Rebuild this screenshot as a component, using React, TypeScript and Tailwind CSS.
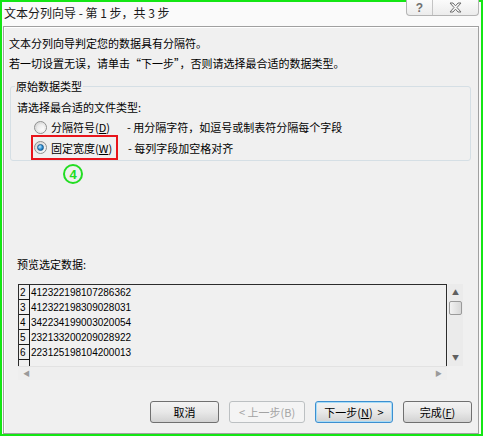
const cjk = "font-['Noto_Sans_CJK_SC','Microsoft_YaHei',sans-serif]";

const rows = [
  ["2", "412322198107286362"],
  ["3", "412322198309028031"],
  ["4", "342234199003020054"],
  ["5", "232133200209028922"],
  ["6", "223125198104200013"],
  ["", ""],
];

function Radio({ checked }: { checked?: boolean }) {
  return (
    <span className="flex h-[13px] w-[13px] shrink-0 items-center justify-center rounded-full border border-[#8e8f8f] bg-gradient-to-br from-[#d4d4d4] to-[#fbfbfb]">
      {checked ? (
        <span className="h-[7px] w-[7px] rounded-full border border-[#1b5e93] bg-[radial-gradient(circle_at_35%_35%,#c4ecff,#2d8fd5_55%,#10507f)]" />
      ) : (
        <span className="h-[7px] w-[7px] rounded-full bg-gradient-to-br from-[#e4e4e4] to-[#ffffff]" />
      )}
    </span>
  );
}

function Btn({ children, kind, w }: { children: React.ReactNode; kind?: "default" | "disabled"; w: string }) {
  let cls = "border-[#707070] bg-gradient-to-b from-[#f3f3f3] via-[#e8e8e8] to-[#d2d2d2] text-black";
  if (kind === "default")
    cls = "border-[#3c8fd0] bg-gradient-to-b from-[#f3f3f3] via-[#e8e8e8] to-[#d2d2d2] text-black shadow-[inset_0_0_0_1px_#a8dcf7]";
  if (kind === "disabled") cls = "border-[#bcc0c2] bg-[#f4f4f4] text-[#a3a3a3]";
  return (
    <button className={`flex h-[22px] items-center justify-center rounded-[3px] border text-[11px] leading-none ${w} ${cls}`}>
      {children}
    </button>
  );
}

export default function App() {
  return (
    <div className={`h-[436px] w-[483px] border-2 border-[#14e614] bg-[#fafafa] text-black ${cjk}`}>
      {/* title bar */}
      <div className="flex h-[24px] items-start justify-between">
        <div className="pl-[2px] pt-[3px] text-[12px] leading-[16px] text-[#1a1a1a]">文本分列向导 - 第 1 步，共 3 步</div>
        <div className="mr-[2px] flex h-[16px] -mt-[2px] rounded-b-[4px] border border-t-0 border-[#b4b4b4] bg-gradient-to-b from-[#fbfbfb] to-[#ececec]">
          <div className="flex w-[26px] items-center justify-center border-r border-[#c4c4c4] text-[12px] font-bold leading-none text-[#707070] font-['Liberation_Sans',sans-serif]">
            ?
          </div>
          <div className="flex w-[45px] items-center justify-center">
            <svg width="13" height="11" viewBox="0 0 13 11">
              <path
                d="M1 1h3l2.5 2.8L9 1h3L8 5.5 12 10H9L6.5 7.2 4 10H1l4-4.5z"
                fill="#f5f5f5"
                stroke="#6f6f6f"
                strokeWidth="1"
                strokeLinejoin="round"
              />
            </svg>
          </div>
        </div>
      </div>

      {/* main panel */}
      <div className="ml-[1px] flex h-[408px] w-[476px] flex-col border border-[#a0a0a0] bg-[#f0f0f0] shadow-[inset_1px_1px_0_#ffffff]">
        <div className="ml-[5px] mt-[8px] text-[11px] leading-[16px]">文本分列向导判定您的数据具有分隔符。</div>
        <div className="ml-[5px] mt-[4px] text-[11px] leading-[16px]">若一切设置无误，请单击“下一步”，否则请选择最合适的数据类型。</div>

        <fieldset className="ml-[6px] mt-[7px] w-[461px] rounded-[3px] border border-[#d5dfe5] pl-[4px] pb-0">
          <legend className="px-[1px] text-[11px] leading-[16px]">原始数据类型</legend>
          <div className="ml-[2px] mt-[5px] text-[11px] leading-[16px]">请选择最合适的文件类型:</div>
          <div className="ml-[19px] mt-[4px] flex h-[16px] items-center text-[11px] leading-[16px]">
            <Radio />
            <span className="ml-[4px] w-[76px]">
              分隔符号(<span className="underline">D</span>)
            </span>
            <span>- 用分隔字符，如逗号或制表符分隔每个字段</span>
          </div>
          <div className="ml-[16px] flex items-center text-[11px] leading-[16px]">
            <div className="flex h-[25px] w-[87px] items-center border-2 border-[#e8141b] pl-[1px]">
              <Radio checked />
              <span className="ml-[4px]">
                固定宽度(<span className="underline">W</span>)
              </span>
            </div>
            <span className="ml-[10px]">- 每列字段加空格对齐</span>
          </div>
        </fieldset>

        <div className="ml-[59px] mt-[3px] flex h-[20px] w-[20px] items-center justify-center rounded-full border-2 border-[#22dd22] text-[13px] font-bold leading-none text-[#22dd22] font-['Liberation_Sans',sans-serif]">
          4
        </div>

        <div className="ml-[13px] mt-[72px] text-[11px] leading-[16px]">预览选定数据:</div>

        <div className="ml-[14px] mt-[12px] flex">
          <div className="flex flex-col">
            <div className="h-[82px] w-[429px] overflow-hidden border border-b-0 border-[#2c2c2c] bg-[#f0f0f0]">
              {rows.map(([n, v], i) => (
                <div key={i} className="flex h-[15px] font-['Liberation_Sans',sans-serif] text-[10px]">
                  <div className="flex w-[11px] items-end border-b border-r border-[#1a1a1a] pl-[1px] leading-[12px]">{n}</div>
                  <div className="pl-[1px] leading-[15px]">{v}</div>
                </div>
              ))}
            </div>
            <div className="flex h-[14px] w-[429px] items-center justify-between border-t border-[#e2e2e2] bg-[#eeeeee] px-[5px] text-[7px] leading-none text-[#9a9a9a]">
              <span>◀</span>
              <span>▶</span>
            </div>
          </div>
          <div className="ml-[1px] flex h-[82px] w-[15px] flex-col items-center bg-[#ebebeb] text-[7px] leading-none text-[#606060]">
            <span className="mt-[5px]">▲</span>
            <div className="mt-[5px] h-[14px] w-[13px] rounded-[2px] border border-[#9a9a9a] bg-gradient-to-r from-[#f2f2f2] to-[#d8d8d8]" />
            <span className="mb-[5px] mt-auto">▼</span>
          </div>
        </div>

        <div className="mt-[21px] flex justify-end gap-[10px] pr-[6px]">
          <Btn w="w-[69px]">取消</Btn>
          <Btn w="w-[76px]" kind="disabled">
            &lt; 上一步(B)
          </Btn>
          <Btn w="w-[78px]" kind="default">
            下一步(<span className="underline">N</span>)&nbsp; &gt;
          </Btn>
          <Btn w="w-[69px]">
            完成(<span className="underline">F</span>)
          </Btn>
        </div>
      </div>
    </div>
  );
}
